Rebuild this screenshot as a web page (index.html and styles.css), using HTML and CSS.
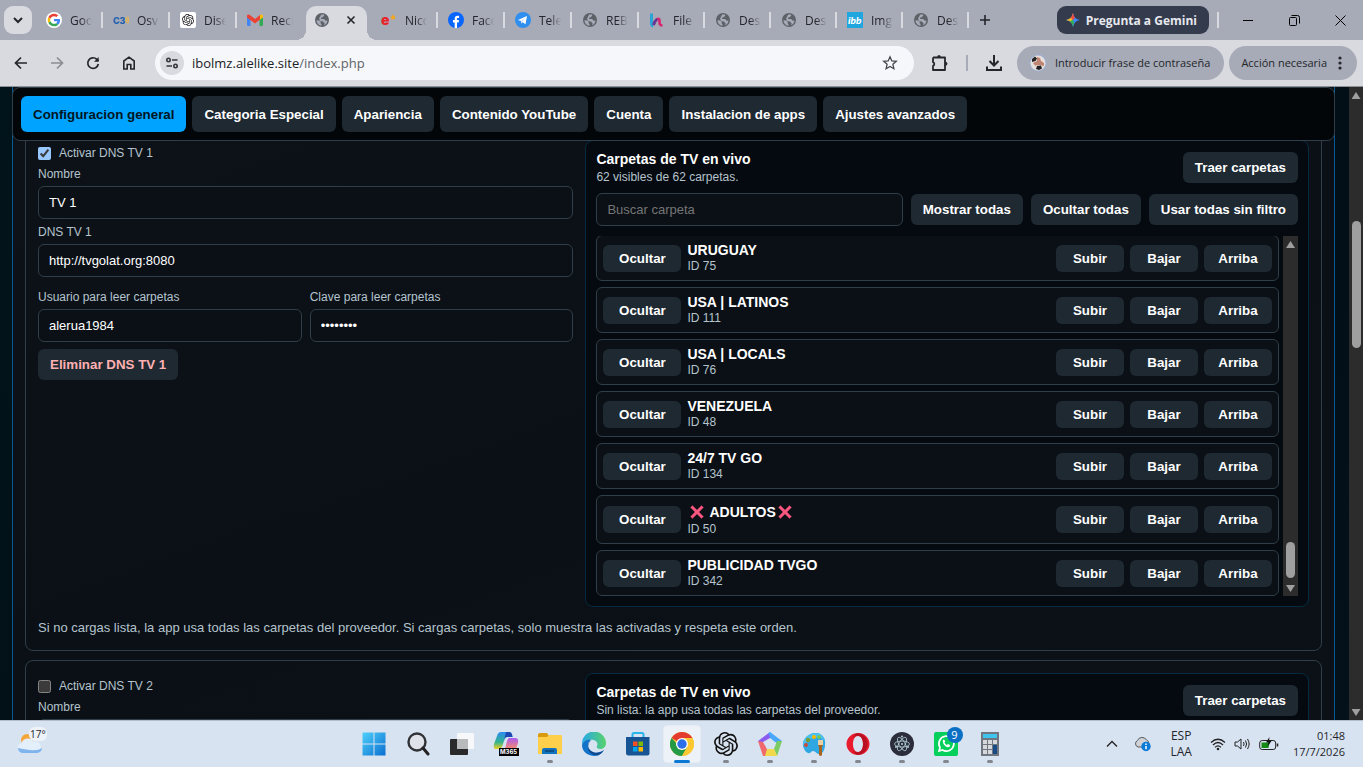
FILE: index.html
```html
<!DOCTYPE html>
<html lang="es">

<head>
    <meta charset="utf-8">
    <title>Configuracion general</title>
    <link rel="stylesheet" href="styles.css">
</head>

<body>
    <!-- Icons used more than once -->
    <svg class="sprite" aria-hidden="true">
        <symbol id="globe" viewBox="0 0 16 16">
            <circle cx="8" cy="8" r="7" fill="#5d6168" />
            <path d="M2.5 8.2l2.6.2 1.7 1.4-.3 1.4 1 .9v1.6C4.700 13.500 2.600 11.300 2.500 8.200zM7.200 2.600l2.600-.1.500 1.200-1.500 1.400-1.900.8.300 1.200h2.900l1.600 1.700 1.800-.3c-.2 2.300-1.500 3.900-3.300 4.700l.4-2-1.800-1.800-2.800-.5-.9-2.400 1.100-2z" fill="#a7abb7" />
        </symbol>
        <symbol id="knot" viewBox="0 0 24 24">
            <path d="M22.2819 9.8211a5.9847 5.9847 0 0 0-.5157-4.9108 6.0462 6.0462 0 0 0-6.5098-2.9A6.0651 6.0651 0 0 0 4.9807 4.1818a5.9847 5.9847 0 0 0-3.9977 2.9 6.0462 6.0462 0 0 0 .7427 7.0966 5.98 5.98 0 0 0 .511 4.9107 6.051 6.051 0 0 0 6.5146 2.9001A5.9847 5.9847 0 0 0 13.2599 24a6.0557 6.0557 0 0 0 5.7718-4.2058 5.9894 5.9894 0 0 0 3.9977-2.9001 6.0557 6.0557 0 0 0-.7475-7.0729zm-9.022 12.6081a4.4755 4.4755 0 0 1-2.8764-1.0408l.1419-.0804 4.7783-2.7582a.7948.7948 0 0 0 .3927-.6813v-6.7369l2.02 1.1686a.071.071 0 0 1 .038.052v5.5826a4.504 4.504 0 0 1-4.4945 4.4944zm-9.6607-4.1254a4.4708 4.4708 0 0 1-.5346-3.0137l.142.0852 4.783 2.7582a.7712.7712 0 0 0 .7806 0l5.8428-3.3685v2.3324a.0804.0804 0 0 1-.0332.0615L9.74 19.9502a4.4992 4.4992 0 0 1-6.1408-1.6464zM2.3408 7.8956a4.485 4.485 0 0 1 2.3655-1.9728V11.6a.7664.7664 0 0 0 .3879.6765l5.8144 3.3543-2.0201 1.1685a.0757.0757 0 0 1-.071 0l-4.8303-2.7865A4.504 4.504 0 0 1 2.3408 7.872zm16.5963 3.8558L13.1038 8.364 15.1192 7.2a.0757.0757 0 0 1 .071 0l4.8303 2.7913a4.4944 4.4944 0 0 1-.6765 8.1042v-5.6772a.79.79 0 0 0-.407-.667zm2.0107-3.0231l-.142-.0852-4.7735-2.7818a.7759.7759 0 0 0-.7854 0L9.409 9.2297V6.8974a.0662.0662 0 0 1 .0284-.0615l4.8303-2.7866a4.4992 4.4992 0 0 1 6.6802 4.66zM8.3065 12.863l-2.02-1.1638a.0804.0804 0 0 1-.038-.0567V6.0742a4.4992 4.4992 0 0 1 7.3757-3.4537l-.142.0805L8.704 5.459a.7948.7948 0 0 0-.3927.6813zm1.0976-2.3654l2.602-1.4998 2.6069 1.4998v2.9994l-2.5974 1.4997-2.6067-1.4997Z" />
        </symbol>
        <symbol id="cross" viewBox="0 0 14 14">
            <path d="M2.500 0.500L7 5l4.500-4.500 2 2L9 7l4.500 4.500-2 2L7 9l-4.500 4.500-2-2L5 7 .5 2.500z" fill="#f8577f" stroke="#b93a5c" stroke-width=".5" />
        </symbol>
    </svg>

    <!-- Browser tabs -->
    <header class="tab-strip">
        <button class="tab-search" aria-label="Buscar pestañas">
            <svg width="12" height="12" viewBox="0 0 12 12"><path d="M2 4l4 4 4-4" fill="none" stroke="#24262b" stroke-width="2" /></svg>
        </button>
        <div class="tabs">
            <a class="tab" href="#">
                <svg width="16" height="16" viewBox="0 0 48 48"><circle cx="24" cy="24" r="24" fill="#fff" /><g transform="translate(5 5) scale(.79)"><path fill="#EA4335" d="M24 9.500c3.540 0 6.710 1.220 9.210 3.600l6.850-6.850C35.900 2.380 30.470 0 24 0 14.620 0 6.510 5.380 2.560 13.220l7.980 6.190C12.430 13.720 17.740 9.500 24 9.500z" /><path fill="#4285F4" d="M46.980 24.550c0-1.570-.15-3.090-.38-4.550H24v9.020h12.940c-.58 2.960-2.260 5.480-4.780 7.180l7.730 6c4.510-4.180 7.090-10.360 7.090-17.650z" /><path fill="#FBBC05" d="M10.530 28.590c-.48-1.450-.76-2.990-.76-4.590s.27-3.140.76-4.590l-7.980-6.190C.92 16.460 0 20.120 0 24c0 3.880.92 7.540 2.560 10.780l7.970-6.190z" /><path fill="#34A853" d="M24 48c6.480 0 11.930-2.130 15.890-5.810l-7.730-6c-2.150 1.450-4.920 2.300-8.160 2.300-6.260 0-11.570-4.220-13.470-9.910l-7.980 6.190C6.510 42.620 14.620 48 24 48z" /></g></svg>
                <span class="tab-title">Goo</span>
            </a>
            <a class="tab" href="#">
                <svg width="16" height="16" viewBox="0 0 18 16"><text x="0" y="12" font-family="Inter" font-weight="800" font-size="10" fill="#2060b0">C3</text><path d="M14.500 5q1 3 0 6M16.500 4q1.500 4 0 8" fill="none" stroke="#f3b544" stroke-width="1.300" /></svg>
                <span class="tab-title">Osv</span>
            </a>
            <a class="tab" href="#">
                <svg width="16" height="16" viewBox="0 0 16 16"><rect width="16" height="16" rx="2" fill="#fff" /><use href="#knot" x="2" y="2" width="12" height="12" fill="#222" /></svg>
                <span class="tab-title">Dise</span>
            </a>
            <a class="tab last" href="#">
                <svg width="16" height="16" viewBox="0 0 16 16"><path d="M0 4v9q0 1 1 1h2.500V7.500z" fill="#4285f4" /><path d="M16 4v9q0 1-1 1h-2.500V7.500z" fill="#34a853" /><path d="M12.500 4v4L16 5.500V3.500q-.8-1.800-2.500-.7z" fill="#fbbc04" /><path d="M0 3.500q.8-1.800 2.500-.7L8 7l5-4v4.500L8 11.500 0 5.500z" fill="#ea4335" /></svg>
                <span class="tab-title">Reci</span>
            </a>
            <a class="tab active" href="#" aria-current="page" aria-label="Configuracion general">
                <svg width="16" height="16"><use href="#globe" /></svg>
                <svg width="12" height="12" viewBox="0 0 12 12"><path d="M2.500 2.500l7 7M9.500 2.500l-7 7" stroke="#24262b" stroke-width="1.600" /></svg>
            </a>
            <a class="tab" href="#">
                <svg width="16" height="16" viewBox="0 0 16 16"><text x="0" y="13" font-family="Inter" font-weight="900" font-size="14" fill="#e8242b">e</text><path d="M11.500 2l1 2 2-.3-1 1.900.7 1.800-2-.5-1.700 1.200v-2L9 5l1.900-.5z" fill="#f5a81c" /></svg>
                <span class="tab-title">Nico</span>
            </a>
            <a class="tab" href="#">
                <svg width="16" height="16" viewBox="0 0 16 16"><circle cx="8" cy="8" r="8" fill="#0866ff" /><path d="M6.700 16v-5.500H5V8h1.700V6.700c0-2 1-3 2.900-3 .6 0 1.100 0 1.500.2v2.200h-1c-1 0-1.200.4-1.200 1.100V8H11l-.4 2.500H9V16z" fill="#fff" /></svg>
                <span class="tab-title">Face</span>
            </a>
            <a class="tab" href="#">
                <svg width="16" height="16" viewBox="0 0 16 16"><circle cx="8" cy="8" r="8" fill="#2f8fee" /><path d="M3 8l9-4-1.500 8.300-2.800-2L6.200 11.600 5.900 9z" fill="#fff" /><path d="M6 9l4-3-3 3.700-.8 1.600z" fill="#b9d6f5" /></svg>
                <span class="tab-title">Tele</span>
            </a>
            <a class="tab" href="#">
                <svg width="16" height="16"><use href="#globe" /></svg>
                <span class="tab-title">REB</span>
            </a>
            <a class="tab narrow" href="#">
                <svg width="16" height="16" viewBox="0 0 16 16"><path d="M2.500 1.500v10q0 2 1.800 2.500" fill="none" stroke="#2aa4d3" stroke-width="3" /><path d="M4.500 13c2-6 6-8 6-4.500s-.2 5 3 5" fill="none" stroke="#d5266f" stroke-width="2.600" /><path d="M4.500 13q1.500-4.500 3.500-6" fill="none" stroke="#5b3d99" stroke-width="2.600" /></svg>
                <span class="tab-title">File</span>
            </a>
            <a class="tab narrow" href="#">
                <svg width="16" height="16"><use href="#globe" /></svg>
                <span class="tab-title">Des</span>
            </a>
            <a class="tab narrow" href="#">
                <svg width="16" height="16"><use href="#globe" /></svg>
                <span class="tab-title">Des</span>
            </a>
            <a class="tab narrow" href="#">
                <svg width="16" height="16" viewBox="0 0 16 16"><rect width="16" height="16" fill="#20a6de" /><text x="1" y="12" font-family="Lato" font-weight="900" font-style="italic" font-size="10" fill="#fff">ibb</text></svg>
                <span class="tab-title">Img</span>
            </a>
            <a class="tab narrow" href="#">
                <svg width="16" height="16"><use href="#globe" /></svg>
                <span class="tab-title">Des</span>
            </a>
        </div>
        <button class="tab-new" aria-label="Nueva pestaña">
            <svg width="12" height="12" viewBox="0 0 12 12"><path d="M6 1v10M1 6h10" stroke="#24262b" stroke-width="1.600" /></svg>
        </button>
        <button class="gemini">
            <svg width="16" height="16" viewBox="0 0 16 16">
                <path d="M8 1q1 6 7 7-6 1-7 7-1-6-7-7 6-1 7-7z" fill="#4087f7" />
                <path d="M8 1q-1 6-7 7 4 .6 5.700 3.200L7.500 8z" fill="#f7b91f" />
                <path d="M8 1q.5 3 2 4.700L8 8 5.700 5.700Q7.400 4 8 1z" fill="#ef4b3d" />
                <path d="M8 15q-.6-3.900-3.200-5.700L8 8l1.200 3Q8.400 12.500 8 15z" fill="#2fae52" />
            </svg>
            Pregunta a Gemini
        </button>
        <span class="strip-line"></span>
        <div class="window-buttons">
            <button aria-label="Minimizar"><svg width="10" height="10" viewBox="0 0 10 10"><path d="M0 5.500h10" stroke="#000" /></svg></button>
            <button aria-label="Restaurar"><svg width="11" height="11" viewBox="0 0 11 11" fill="none" stroke="#000"><rect x=".5" y="2.500" width="7" height="8" rx="1" /><path d="M2.500 .5h6q2 0 2 2v6" /></svg></button>
            <button aria-label="Cerrar"><svg width="11" height="11" viewBox="0 0 11 11"><path d="M.5.5l10 10M10.500.5l-10 10" stroke="#000" /></svg></button>
        </div>
    </header>

    <!-- Browser toolbar -->
    <div class="toolbar">
        <button class="tool" aria-label="Atrás"><svg width="16" height="16" viewBox="0 0 16 16"><path d="M14 8H3M8 2.500L2.500 8 8 13.500" fill="none" stroke="#24262b" stroke-width="1.700" /></svg></button>
        <button class="tool" aria-label="Adelante" disabled><svg width="16" height="16" viewBox="0 0 16 16"><path d="M2 8h11M8 2.500L13.500 8 8 13.500" fill="none" stroke="#8b8d93" stroke-width="1.700" /></svg></button>
        <button class="tool" aria-label="Recargar"><svg width="16" height="16" viewBox="0 0 16 16"><path d="M13.300 9a5.300 5.300 0 1 1-1.500-4.700L13.500 6" fill="none" stroke="#24262b" stroke-width="1.700" /><path d="M13.700 2v4.700H9z" fill="#24262b" /></svg></button>
        <button class="tool" aria-label="Inicio"><svg width="16" height="16" viewBox="0 0 16 16"><path d="M2.800 14V6L8 2.200 13.200 6v8H9.800V9.500H6.200V14z" fill="none" stroke="#24262b" stroke-width="1.600" /></svg></button>
        <div class="omnibox">
            <button class="site-info" aria-label="Información del sitio"><svg width="14" height="14" viewBox="0 0 14 14" fill="none" stroke="#33363b" stroke-width="1.600"><circle cx="3.500" cy="4" r="1.700" /><path d="M7 4h5.500M1.500 10H7" /><circle cx="10.500" cy="10" r="1.700" /></svg></button>
            <span class="url"><b>ibolmz.alelike.site</b>/index.php</span>
            <button class="star" aria-label="Añadir a marcadores"><svg width="16" height="16" viewBox="0 0 16 16"><path d="M8 1.800l1.800 4.100 4.500.4-3.400 3 1 4.400L8 11.400l-3.900 2.300 1-4.400-3.400-3 4.500-.4z" fill="none" stroke="#43464c" stroke-width="1.300" /></svg></button>
        </div>
        <button class="tool extensions" aria-label="Extensiones"><svg width="18" height="18" viewBox="0 0 18 18"><path d="M2 3.500h12V8M14 11.500V16H2v-4.200a1.900 1.900 0 0 0 0-3.600V3.500" fill="none" stroke="#24262b" stroke-width="1.800" stroke-linejoin="round" /><path d="M6 3.500a2 2.500 0 0 1 4 0zM14 7.700a2.500 2 0 0 1 0 4z" fill="#24262b" /><path d="M14 7.500v4.500" stroke="#24262b" stroke-width="1.800" /></svg></button>
        <span class="toolbar-line"></span>
        <button class="tool" aria-label="Descargas"><svg width="18" height="18" viewBox="0 0 18 18"><path d="M9 1v10M4.500 7L9 11.500 13.500 7M2 12.500V16h14v-3.500" fill="none" stroke="#24262b" stroke-width="2" /></svg></button>
        <button class="chip profile">
            <svg width="18" height="18" viewBox="0 0 18 18"><circle cx="9" cy="9" r="8.500" fill="#9fb2d6" /><circle cx="9" cy="9" r="7.500" fill="#e6dfdc" /><path d="M8 3l3 1 1 3 3 2v3l-4-1-5 .5L4 9l4-2z" fill="#c08472" /><path d="M3 5l3-2.500 2 2L6.500 7 3 8zM8 12l4-.5 1 3-3 1.500-3-1z" fill="#222" /></svg>
            Introducir frase de contraseña
        </button>
        <button class="chip">
            Acción necesaria
            <svg width="8" height="16" viewBox="0 0 8 16" fill="#24262b"><circle cx="5" cy="3" r="1.600" /><circle cx="5" cy="8" r="1.600" /><circle cx="5" cy="13" r="1.600" /></svg>
        </button>
    </div>

    <div class="page">
        <main class="viewport">
            <div class="panel">
                <nav class="nav">
                    <button class="btn nav-btn current">Configuracion general</button>
                    <button class="btn nav-btn">Categoria Especial</button>
                    <button class="btn nav-btn">Apariencia</button>
                    <button class="btn nav-btn">Contenido YouTube</button>
                    <button class="btn nav-btn">Cuenta</button>
                    <button class="btn nav-btn">Instalacion de apps</button>
                    <button class="btn nav-btn">Ajustes avanzados</button>
                </nav>

                <!-- DNS TV 1 -->
                <section class="card first">
                    <div class="card-grid">
                        <form class="dns">
                            <label class="check"><input type="checkbox" checked> Activar DNS TV 1</label>
                            <label for="name1">Nombre</label>
                            <input class="text" type="text" id="name1" value="TV 1">
                            <label for="dns1">DNS TV 1</label>
                            <input class="text" type="text" id="dns1" value="http://tvgolat.org:8080">
                            <div class="credentials">
                                <div>
                                    <label for="user1">Usuario para leer carpetas</label>
                                    <input class="text" type="text" id="user1" value="alerua1984">
                                </div>
                                <div>
                                    <label for="pass1">Clave para leer carpetas</label>
                                    <input class="text" type="password" id="pass1" value="password">
                                </div>
                            </div>
                            <button class="btn danger" type="button">Eliminar DNS TV 1</button>
                        </form>

                        <div class="folders">
                            <div class="folders-head">
                                <div>
                                    <h3>Carpetas de TV en vivo</h3>
                                    <p>62 visibles de 62 carpetas.</p>
                                </div>
                                <button class="btn">Traer carpetas</button>
                            </div>
                            <div class="folders-tools">
                                <input class="text" type="text" placeholder="Buscar carpeta" aria-label="Buscar carpeta">
                                <button class="btn">Mostrar todas</button>
                                <button class="btn">Ocultar todas</button>
                                <button class="btn">Usar todas sin filtro</button>
                            </div>
                            <div class="list-wrap">
                                <ul class="list">
                                    <li class="row">
                                        <button class="btn hide">Ocultar</button>
                                        <div class="name"><strong>URUGUAY</strong><small>ID 75</small></div>
                                        <button class="btn move">Subir</button><button class="btn move">Bajar</button><button class="btn move">Arriba</button>
                                    </li>
                                    <li class="row">
                                        <button class="btn hide">Ocultar</button>
                                        <div class="name"><strong>USA | LATINOS</strong><small>ID 111</small></div>
                                        <button class="btn move">Subir</button><button class="btn move">Bajar</button><button class="btn move">Arriba</button>
                                    </li>
                                    <li class="row">
                                        <button class="btn hide">Ocultar</button>
                                        <div class="name"><strong>USA | LOCALS</strong><small>ID 76</small></div>
                                        <button class="btn move">Subir</button><button class="btn move">Bajar</button><button class="btn move">Arriba</button>
                                    </li>
                                    <li class="row">
                                        <button class="btn hide">Ocultar</button>
                                        <div class="name"><strong>VENEZUELA</strong><small>ID 48</small></div>
                                        <button class="btn move">Subir</button><button class="btn move">Bajar</button><button class="btn move">Arriba</button>
                                    </li>
                                    <li class="row">
                                        <button class="btn hide">Ocultar</button>
                                        <div class="name"><strong>24/7 TV GO</strong><small>ID 134</small></div>
                                        <button class="btn move">Subir</button><button class="btn move">Bajar</button><button class="btn move">Arriba</button>
                                    </li>
                                    <li class="row">
                                        <button class="btn hide">Ocultar</button>
                                        <div class="name"><strong class="marked"><svg width="14" height="14"><use href="#cross" /></svg><span>ADULTOS</span><svg width="14" height="14"><use href="#cross" /></svg></strong><small>ID 50</small></div>
                                        <button class="btn move">Subir</button><button class="btn move">Bajar</button><button class="btn move">Arriba</button>
                                    </li>
                                    <li class="row">
                                        <button class="btn hide">Ocultar</button>
                                        <div class="name"><strong>PUBLICIDAD TVGO</strong><small>ID 342</small></div>
                                        <button class="btn move">Subir</button><button class="btn move">Bajar</button><button class="btn move">Arriba</button>
                                    </li>
                                </ul>
                                <div class="scrollbar list-scroll">
                                    <span class="arrow-up"></span>
                                    <span class="thumb"></span>
                                    <span class="arrow-down"></span>
                                </div>
                            </div>
                        </div>
                    </div>
                    <p class="hint">Si no cargas lista, la app usa todas las carpetas del proveedor. Si cargas carpetas, solo muestra las activadas y respeta este orden.</p>
                </section>

                <!-- DNS TV 2 -->
                <section class="card">
                    <div class="card-grid">
                        <form class="dns">
                            <label class="check"><input type="checkbox"> Activar DNS TV 2</label>
                            <label for="name2">Nombre</label>
                            <input class="text" type="text" id="name2">
                        </form>
                        <div class="folders">
                            <div class="folders-head">
                                <div>
                                    <h3>Carpetas de TV en vivo</h3>
                                    <p>Sin lista: la app usa todas las carpetas del proveedor.</p>
                                </div>
                                <button class="btn">Traer carpetas</button>
                            </div>
                        </div>
                    </div>
                </section>
            </div>
        </main>
        <div class="scrollbar page-scroll">
            <span class="arrow-up"></span>
            <span class="thumb"></span>
            <span class="arrow-down"></span>
        </div>
    </div>

    <!-- Windows taskbar -->
    <footer class="taskbar">
        <div class="weather">
            <svg width="28" height="26" viewBox="0 0 28 26">
                <circle cx="11" cy="9" r="6" fill="#f4a63a" />
                <path d="M6 22a5 5 0 0 1-.5-9.800 6.500 6.500 0 0 1 12-1.200A5.600 5.600 0 0 1 21 22z" fill="#e3f0fc" />
                <path d="M2 17a5 5 0 0 0 4 5h15a5.500 5.500 0 0 0 5-5q-4 3-12 2T2 17z" fill="#7fb4ee" />
            </svg>
            <span class="temp">17°</span>
        </div>
        <div class="apps">
            <button class="app" aria-label="Inicio"><svg width="24" height="24" viewBox="0 0 24 24"><defs><linearGradient id="win" x1="0" y1="0" x2="1" y2="1"><stop offset="0" stop-color="#4fd0fb" /><stop offset="1" stop-color="#0a6fd0" /></linearGradient></defs><path d="M.5.5h11v11H.5zM12.500.5h11v11h-11zM.5 12.500h11v11H.5zM12.500 12.500h11v11h-11z" fill="url(#win)" /></svg></button>
            <button class="app" aria-label="Buscar"><svg width="24" height="24" viewBox="0 0 24 24"><circle cx="11" cy="10" r="8.500" fill="#dfe3e9" stroke="#303236" stroke-width="2.400" /><path d="M17 16l5 6" stroke="#222" stroke-width="3" stroke-linecap="round" /></svg></button>
            <button class="app" aria-label="Vista de tareas"><svg width="24" height="24" viewBox="0 0 24 24"><rect x="0" y="7" width="18" height="16" rx="1" fill="#2a2a2b" /><rect x="7" y="1" width="17" height="16" rx="1" fill="#f7f8fa" /><path d="M7 7h11v10H7z" fill="#b9babc" /></svg></button>
            <button class="app" aria-label="Microsoft 365"><svg width="26" height="24" viewBox="0 0 26 24"><defs><linearGradient id="left" x1="0" y1="0" x2="0" y2="1"><stop offset="0" stop-color="#2a8bf0" /><stop offset=".6" stop-color="#35b48d" /><stop offset="1" stop-color="#f2d021" /></linearGradient><linearGradient id="right" x1="0" y1="0" x2="0" y2="1"><stop offset="0" stop-color="#a95cf0" /><stop offset="1" stop-color="#fb8a6c" /></linearGradient></defs><path d="M8 0h8q3 0 3.500 5H14q-2 0-3 4l-2 6q-1 2-4 2H3q-3 0-2-5L4 4q1-4 4-4z" fill="url(#left)" /><path d="M13 0h3q3 0 3.500 5H14q-2 0-3 4z" fill="#1b48b3" /><path d="M16 6h6q4 0 3 5l-2 6H12l2-8q1-3 2-3z" fill="url(#right)" /><rect x="6" y="16" width="20" height="8" fill="#000" /><text x="7" y="22" font-family="Inter" font-weight="700" font-size="6" fill="#fff">M365</text></svg></button>
            <button class="app open" aria-label="Explorador de archivos"><svg width="24" height="24" viewBox="0 0 24 24"><path d="M0 3q0-2 2-2h7l2 3v4H0z" fill="#d99a0c" /><path d="M0 5h9l2-2h12q1 0 1 1v18H0z" fill="#fdcf4b" /><path d="M4 22v-4q0-2 2-2h11q2 0 2 2v4z" fill="#1173bd" /><path d="M7 18h9v2H7z" fill="#0b4e8a" /></svg></button>
            <button class="app" aria-label="Edge"><svg width="24" height="24" viewBox="0 0 24 24"><defs><linearGradient id="edge" x1="0" x2="1"><stop offset="0" stop-color="#28a8e8" /><stop offset="1" stop-color="#58d26b" /></linearGradient></defs><path d="M0 12a12 12 0 0 1 24-1c0 4-3 6-6 6-2 0-4-1-3-3 2-4-3-7-7-6-4 0-7 2-8 5z" fill="url(#edge)" /><path d="M0 13c1-4 5-6 9-5-4 2-4 8 0 11 4 3 9 2 13-1-3 5-8 7-13 5.500C3 22 0 18 0 13z" fill="#1373c9" /><path d="M9 8c-4 3-4 8 0 11 4 3 9 2 13-1q-2 4-6 5.500c-6 0-10-3-10-8.500q0-4 3-7z" fill="#114a93" /></svg></button>
            <button class="app" aria-label="Microsoft Store"><svg width="24" height="24" viewBox="0 0 24 24"><path d="M6.500 5V2.500q0-1.500 1.500-1.500h8q1.500 0 1.500 1.500V5" fill="none" stroke="#28b3ea" stroke-width="2" /><path d="M0 5h23.500v16q0 2.500-2.500 2.500H2.500Q0 23.500 0 21z" fill="#165493" /><path d="M7 9.500h4.500V14H7z" fill="#f25022" /><path d="M12.500 9.500H17V14h-4.500z" fill="#7fba00" /><path d="M7 15h4.500v4.500H7z" fill="#00a4ef" /><path d="M12.500 15H17v4.500h-4.500z" fill="#ffb900" /></svg></button>
            <button class="app open focused" aria-label="Chrome"><svg width="24" height="24" viewBox="0 0 24 24"><circle cx="12" cy="12" r="12" fill="#fcc934" /><path d="M12 12L1.600 6A12 12 0 0 1 22.400 6z" fill="#e33b2e" /><path d="M1.600 6A12 12 0 0 0 12 24l5.200-9L12 12H7z" fill="#249a47" /><path d="M12 6h10.400A12 12 0 0 1 12 24l5.200-9z" fill="#fcc934" /><circle cx="12" cy="12" r="6" fill="#fff" /><circle cx="12" cy="12" r="4.700" fill="#2d6fe8" /></svg></button>
            <button class="app open" aria-label="ChatGPT"><svg width="24" height="24" fill="#111"><use href="#knot" /></svg></button>
            <button class="app open" aria-label="Pentágono"><svg width="24" height="24" viewBox="0 0 24 24"><path d="M12 0l12 9-5 2-7-5z" fill="#4aa8fb" /><path d="M12 0v6l-7 4-1 3-4-4z" fill="#8b5cf0" /><path d="M12 0L10 1.500 16 9l3 2V8z" fill="#4aa8fb" /><path d="M24 9l-5 15-3-7 3-8z" fill="#7ccb63" /><path d="M19.200 24H6l2-7h8z" fill="#f2d84b" /><path d="M0 9l5 15h2l2-7-4-7z" fill="#f0696c" /><path d="M12 7l5 4-2 6H9l-2-6z" fill="#d8e3f1" /></svg></button>
            <button class="app open" aria-label="Paint"><svg width="24" height="24" viewBox="0 0 24 24"><path d="M1 14C0 6 8 0 15 1c6 1 9 6 8 12 0 4-2 9-6 9-3 0-3-3-6-3-2 0-2 3-5 2-3-1-4-4-5-7z" fill="#2fa7e2" /><path d="M1 14C0 6 8 0 15 1c4 1 7 4 8 8-6-5-15-5-22 5z" fill="#49c1ef" /><circle cx="12" cy="5" r="2" fill="#ffb900" /><circle cx="6" cy="8" r="2.200" fill="#7a9c32" /><circle cx="4" cy="13" r="2" fill="#c64d3f" /><circle cx="17" cy="5" r="1.800" fill="#7ccb45" /><path d="M16 8h5v5l-1 2v8q-1.500 2-3 0v-8l-1-2z" fill="#a8641e" /><path d="M16 8h5v5h-5z" fill="#ead0a4" /></svg></button>
            <button class="app open" aria-label="Opera"><svg width="24" height="24" viewBox="0 0 24 24"><path fill-rule="evenodd" d="M12 1a11.500 11 0 1 0 0 22 11.500 11 0 1 0 0-22zm0 3c3 0 5 3.500 5 8s-2 8-5 8-5-3.500-5-8 2-8 5-8z" fill="#e81c2e" /><path d="M14 1.500a11 11 0 0 1 0 21Q9 24 7 18q3 3 6 2c3-1 4-4 4-8s-1-7-4-8q-3-1-6 2 2-6 7-4.500z" fill="#b90f22" /></svg></button>
            <button class="app open" aria-label="Electron"><svg width="24" height="24" viewBox="0 0 24 24"><circle cx="12" cy="12" r="12" fill="#2b2e3a" /><g fill="none" stroke="#b5d2da" stroke-width=".8"><ellipse cx="12" cy="12" rx="7.500" ry="3" transform="rotate(0 12 12)" /><ellipse cx="12" cy="12" rx="7.500" ry="3" transform="rotate(60 12 12)" /><ellipse cx="12" cy="12" rx="7.500" ry="3" transform="rotate(120 12 12)" /></g><circle cx="12" cy="12" r="1" fill="#b5d2da" /><circle cx="6" cy="15" r="1" fill="#b5d2da" /><circle cx="18" cy="15" r="1" fill="#b5d2da" /><circle cx="12" cy="4.500" r="1" fill="#b5d2da" /></svg></button>
            <button class="app open" aria-label="WhatsApp"><svg width="24" height="24" viewBox="0 0 24 24"><rect width="24" height="24" rx="2" fill="#06cf5b" /><path d="M5 19l1-3.500A7.500 7.500 0 1 1 8.500 18z" fill="none" stroke="#fff" stroke-width="1.700" /><path d="M9 8q1-1 1.500 0l.7 1.500-.7 1q1 2 2.500 2.500l1-1 2 1q.5 2-2 2.200C11 15 8 11 9 8z" fill="#fff" /></svg><span class="badge">9</span></button>
            <button class="app open" aria-label="Calculadora"><svg width="24" height="24" viewBox="0 0 24 24"><path d="M3 0h18v24H3z" fill="#6f767f" /><path d="M5 2h14v4H5z" fill="#3fc4ee" /><path d="M5 8h4v4H5zM10 8h4v4h-4zM15 8h4v4h-4zM5 13h4v4H5zM10 13h4v4h-4zM5 18h4v4H5zM10 18h4v4h-4z" fill="#d6d8db" /><path d="M15 13h4v9h-4z" fill="#174a86" /></svg></button>
        </div>
        <div class="tray">
            <svg class="more" width="12" height="12" viewBox="0 0 12 12"><path d="M1 8.500l5-5 5 5" fill="none" stroke="#222" stroke-width="1.300" /></svg>
            <svg width="18" height="16" viewBox="0 0 18 16"><path d="M4 11a3.500 3.500 0 0 1-.5-6.500 5 5 0 0 1 9-.5A4 4 0 0 1 15 8l-4 3z" fill="#d0d2d5" stroke="#55585c" /><circle cx="12" cy="10.500" r="4.700" fill="#0b7bd8" /><path d="M12 7.500v1.500M12 10v3.300" stroke="#fff" stroke-width="1.500" /></svg>
            <span class="lang">ESP<br>LAA</span>
            <svg width="16" height="14" viewBox="0 0 16 14"><path d="M1 5.500q7-6.500 14 0M3 8q5-5 10 0M5 10.300q3-3 6 0" fill="none" stroke="#222" stroke-width="1.200" /><circle cx="8" cy="12" r="1.300" fill="#222" /></svg>
            <svg width="17" height="14" viewBox="0 0 17 14" fill="none" stroke="#222"><path d="M1 5h2.500L7 2v10L3.500 9H1zM9.500 5q1.200 2 0 4M11.500 3.500q2.200 3.500 0 7M13.500 2q3.200 5 0 10" /></svg>
            <svg width="20" height="14" viewBox="0 0 20 14"><rect x=".7" y="3.500" width="16" height="9" rx="2.500" fill="none" stroke="#222" /><path d="M2.500 5.500h8l-1 5.500h-7z" fill="#138a13" /><path d="M18.500 6.500v3" stroke="#222" stroke-width="1.500" /><path d="M10.500 0L7 5.500h2.500l-1 4 4-5.500H10z" fill="#111" /></svg>
            <span class="clock">01:48<br>17/7/2026</span>
        </div>
    </footer>
</body>

</html>
```

FILE: styles.css
```css
* {
    box-sizing: border-box;
}

body {
    margin: 0;
    height: 100vh;
    display: flex;
    flex-direction: column;
    overflow: hidden;
    font-family: "Liberation Sans", Arial, sans-serif;
    background: #02080d;
}

button,
input {
    font-family: inherit;
}

button {
    border: 0;
    padding: 0;
    background: none;
    cursor: pointer;
}

svg {
    display: block;
    flex: none;
}

.sprite {
    position: absolute;
    width: 0;
    height: 0;
}

/* Browser tabs */
.tab-strip,
.toolbar,
.taskbar {
    flex: none;
    font-family: "Open Sans", "Noto Sans", sans-serif;
    font-size: 12px;
    color: #24262b;
}

.tab-strip button,
.toolbar button,
.taskbar button {
    display: flex;
    align-items: center;
    justify-content: center;
    color: inherit;
}

.tab-strip {
    display: flex;
    align-items: center;
    height: 40px;
    padding-left: 4px;
    background: #a7abb7;
}

.tab-search {
    width: 28px;
    height: 28px;
    border-radius: 9px;
    margin-right: 4px;
}

.tab-strip .tab-search {
    background: #d9dae0;
}

.tabs {
    display: flex;
    align-self: stretch;
    min-width: 0;
}

.tab {
    position: relative;
    flex: 0 1 67px;
    width: 67px;
    display: flex;
    align-items: center;
    gap: 8px;
    padding-left: 10px;
    color: inherit;
    text-decoration: none;
}

.tab.narrow {
    flex-basis: 66px;
}

/* Short line between two tabs */
.tab::after {
    content: "";
    position: absolute;
    right: 0;
    top: 12px;
    width: 2px;
    height: 16px;
    background: #d9dae0;
}

.tab.last::after {
    display: none;
}

.tab-title {
    width: 22px;
    overflow: hidden;
    white-space: nowrap;
    mask-image: linear-gradient(90deg, #000 50%, transparent);
}

.tab.active {
    align-self: flex-end;
    height: 34px;
    margin: 0 4px 0 2px;
    padding: 0 10px 6px 8px;
    flex-basis: 61px;
    justify-content: space-between;
    background: #d9dae0;
    border-radius: 10px 10px 0 0;
}

/* Curved feet of the active tab */
.tab.active::before,
.tab.active::after {
    content: "";
    position: absolute;
    top: auto;
    bottom: 0;
    width: 10px;
    height: 10px;
}

.tab.active::before {
    left: -10px;
    background: radial-gradient(circle at 0 0, #a7abb7 10px, #d9dae0 10px);
}

.tab.active::after {
    right: -10px;
    background: radial-gradient(circle at 100% 0, #a7abb7 10px, #d9dae0 10px);
}

.tab-new {
    width: 28px;
    height: 28px;
    margin-left: 2px;
}

.tab-strip .gemini {
    gap: 5px;
    height: 28px;
    margin-left: auto;
    padding: 0 12px 0 8px;
    border-radius: 9px;
    background: #343b4c;
    color: #e6e8ee;
    font: 700 12px "Open Sans", sans-serif;
}

.strip-line {
    width: 2px;
    height: 16px;
    margin: 0 6px 0 8px;
    background: #d9dae0;
}

.window-buttons {
    display: flex;
}

.window-buttons button {
    width: 46px;
    height: 40px;
}

/* Browser toolbar */
.toolbar {
    display: flex;
    align-items: center;
    height: 47px;
    padding: 0 6px 1px 3px;
    background: #d9dae0;
    border-bottom: 1px solid #8d9097;
}

.tool {
    width: 36px;
    height: 34px;
}

.omnibox {
    flex: 1;
    display: flex;
    align-items: center;
    height: 34px;
    margin: 0 8px;
    padding: 0 16px 0 5px;
    border-radius: 17px;
    background: #f5f7fa;
}

.toolbar .site-info {
    width: 24px;
    height: 24px;
    border-radius: 50%;
    background: #d9dae0;
}

.url {
    flex: 1;
    padding-left: 8px;
    font-size: 13px;
    color: #5f6368;
}

.url b {
    font-weight: 400;
    color: #202124;
}

.toolbar-line {
    width: 2px;
    height: 16px;
    margin: 0 8px;
    background: #a7abb7;
}

.toolbar .chip {
    gap: 8px;
    height: 34px;
    margin-left: 5px;
    padding: 0 14px 0 12px;
    border-radius: 17px;
    background: #a7abb7;
    font-size: 11px;
    white-space: nowrap;
}

/* Page area */
.page {
    flex: 1;
    min-height: 0;
    display: flex;
    overflow: hidden;
}

.viewport {
    flex: 1;
    min-width: 0;
    padding: 0 14px 0 12px;
    overflow: hidden;
    background: linear-gradient(100deg, #02141b, #02090f 30%, #020a11 80%, #03111b);
}

.panel {
    padding: 0 12px;
    border: solid #075a93;
    border-width: 0 1px;
    background: linear-gradient(160deg, #0d1219, #0a1016 50%, #0c1118);
}

.nav {
    position: relative;
    z-index: 1;
    display: flex;
    gap: 6px;
    margin: 0 -13px;
    padding: 8px;
    border: 1px solid #2f3e48;
    border-radius: 8px;
    background: #030608;
}

.btn {
    flex: none;
    height: 31px;
    padding: 0 12px;
    border-radius: 6px;
    background: #1e2932;
    color: #fff;
    font-weight: 700;
    white-space: nowrap;
}

.nav-btn {
    height: 36px;
}

.current {
    background: #00a3ff;
    color: #001522;
}

.danger {
    margin-top: 7px;
    color: #ffb1b1;
}

.card {
    margin-bottom: 9px;
    padding: 12px 12px 14px;
    border: 1px solid #2f3e48;
    border-radius: 8px;
}

.card.first {
    margin-top: -14px;
}

.card-grid {
    display: grid;
    grid-template-columns: 74fr 100fr;
    gap: 12px;
}

.dns {
    padding-top: 5px;
    color: #b5c4cd;
}

.dns label {
    display: block;
    margin: 6px 0 5px;
    font-size: 12px;
    line-height: 14px;
}

.dns .check {
    display: flex;
    align-items: center;
    gap: 8px;
    margin-top: 0;
    line-height: 16px;
}

.check input {
    margin: 0;
    color-scheme: dark;
}

.text {
    display: block;
    width: 100%;
    height: 33px;
    padding: 0 10px;
    border: 1px solid #2f3e48;
    border-radius: 6px;
    background: #0b1016;
    color: #fff;
    font-size: 13px;
}

.text::placeholder {
    color: #757575;
}

.credentials {
    display: grid;
    grid-template-columns: 1fr 1fr;
    gap: 8px;
    margin-top: 13px;
}

.credentials label {
    margin-top: 0;
}

.folders {
    padding: 10px;
    border: 1px solid #062b41;
    border-radius: 8px;
    background: #050a10;
}

.folders-head {
    display: flex;
    align-items: center;
    justify-content: space-between;
}

.folders-head h3 {
    margin: 0 0 3px;
    font-size: 14px;
    line-height: 16px;
    color: #fff;
}

.folders-head p {
    margin: 0;
    font-size: 12px;
    line-height: 14px;
    color: #b5c4cd;
}

.folders-tools {
    display: flex;
    align-items: center;
    gap: 8px;
    margin: 9px 0 10px;
}

.folders-tools .text {
    flex: 1;
    min-width: 0;
}

.list-wrap {
    display: flex;
    gap: 4px;
    height: 360px;
}

/* Scrolled to the end, so the last row sits on the bottom edge */
.list {
    flex: 1;
    display: flex;
    flex-direction: column;
    justify-content: flex-end;
    gap: 6px;
    margin: 0;
    padding: 0;
    overflow: hidden;
    list-style: none;
}

.row {
    flex: none;
    display: flex;
    align-items: center;
    gap: 6px;
    padding: 6px;
    border: 1px solid #2f3e48;
    border-radius: 6px;
    background: #0b1016;
}

.row .btn {
    height: 27px;
    padding: 0;
}

.hide {
    width: 78px;
}

.move {
    width: 68px;
}

.name {
    flex: 1;
}

.name strong,
.name small {
    display: block;
    line-height: 16px;
}

.name strong {
    font-size: 14px;
    color: #fff;
}

.name small {
    font-size: 12px;
    color: #b5c4cd;
}

.name .marked {
    display: flex;
    align-items: center;
    gap: 2px;
    height: 19px;
    padding-left: 3px;
}

.marked span {
    padding-left: 3px;
}

.hint {
    margin: 13px 0 0;
    font-size: 13px;
    line-height: 16px;
    color: #b5c4cd;
}

/* Scrollbars */
.scrollbar {
    flex: none;
    display: flex;
    flex-direction: column;
    align-items: center;
    width: 15px;
    padding: 5px 0 4px;
    background: #2c2c2c;
}

.thumb {
    width: 9px;
    border-radius: 5px;
    background: #9f9f9f;
}

.arrow-up,
.arrow-down {
    width: 9px;
    height: 7px;
    background: #9f9f9f;
    clip-path: polygon(50% 0, 100% 100%, 0 100%);
}

.arrow-down {
    clip-path: polygon(0 0, 100% 0, 50% 100%);
}

.page-scroll {
    width: 14px;
}

.page-scroll .thumb {
    height: 127px;
    margin: 122px 0 auto;
}

.list-scroll .thumb {
    height: 36px;
    margin: auto 0 7px;
}

/* Windows taskbar */
.taskbar {
    display: grid;
    grid-template-columns: 1fr auto 1fr;
    align-items: center;
    height: 47px;
    border-top: 1px solid #b4bdc9;
    background: #d8e3f1;
}

.weather {
    position: relative;
    padding-left: 16px;
}

.temp {
    position: absolute;
    left: 29px;
    top: -4px;
    padding: 0 1px;
    border-radius: 6px;
    background: #eef3f9;
    font-size: 10px;
    line-height: 14px;
}

.apps {
    display: flex;
}

.app {
    position: relative;
    width: 44px;
    height: 46px;
}

.focused::before {
    content: "";
    position: absolute;
    inset: 4px 3px;
    border: 1px solid #e6ecf4;
    border-radius: 4px;
    background: #edf2f9;
}

.focused svg {
    position: relative;
}

.open::after {
    content: "";
    position: absolute;
    bottom: 4px;
    left: 19px;
    width: 6px;
    height: 3px;
    border-radius: 2px;
    background: #82878f;
}

.focused::after {
    left: 14px;
    width: 16px;
    background: #0b78d4;
}

.badge {
    position: absolute;
    top: 6px;
    right: 5px;
    width: 16px;
    height: 16px;
    border-radius: 50%;
    background: #0b6fc4;
    color: #fff;
    font-size: 11px;
    line-height: 16px;
}

.tray {
    justify-self: end;
    display: flex;
    align-items: center;
    gap: 8px;
    padding-right: 18px;
    line-height: 16px;
}

.more {
    margin-right: 8px;
}

.lang {
    margin: 0 10px;
    text-align: center;
}

.clock {
    margin-left: 6px;
    font-size: 11px;
    line-height: 16px;
    text-align: right;
}
```
